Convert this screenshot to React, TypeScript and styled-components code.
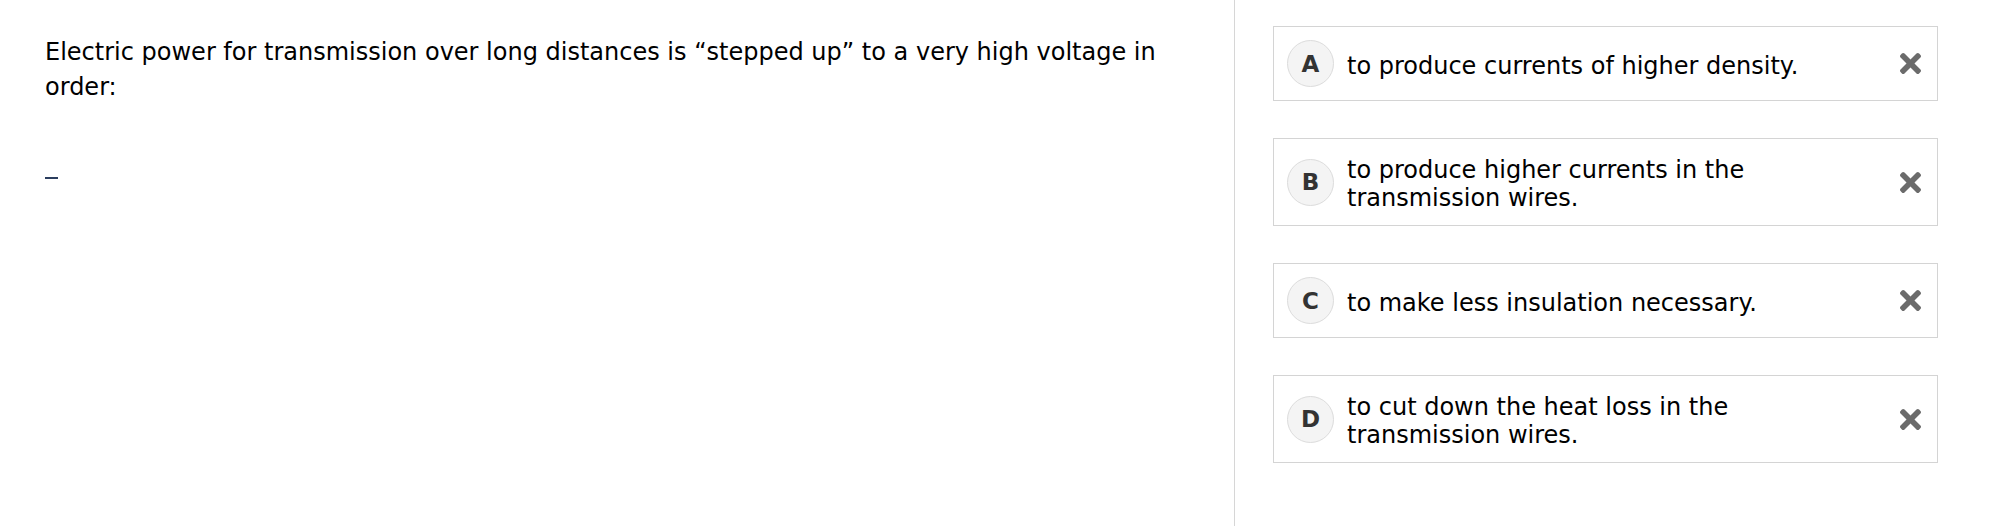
import React from "react";
import styled, { createGlobalStyle } from "styled-components";

const GlobalStyle = createGlobalStyle`
  html, body {
    margin: 0;
    padding: 0;
    background: #ffffff;
  }
  body {
    font-family: "DejaVu Sans", Verdana, sans-serif;
    color: #000;
  }
`;

const Page = styled.div`
  display: flex;
  width: 2000px;
  height: 526px;
  overflow: hidden;
`;

const QuestionPanel = styled.section`
  width: 1144px;
  flex: none;
  padding: 35px 45px 0 45px;
  border-right: 1px solid #d6d6d6;
`;

const QuestionText = styled.p`
  margin: 0;
  font-size: 24px;
  line-height: 35px;
  color: #000;
`;

const AnswerMark = styled.span`
  display: block;
  width: 13px;
  height: 2px;
  margin-top: 72px;
  background: #2b3e5e;
`;

const OptionsPanel = styled.section`
  flex: 1;
  display: flex;
  flex-direction: column;
  gap: 37px;
  padding: 26px 62px 0 38px;
`;

const OptionBox = styled.div`
  display: flex;
  align-items: center;
  gap: 13px;
  padding: 13px 16px 13px 13px;
  border: 1px solid #d4d4d4;
  background: #fff;
`;

const Letter = styled.span`
  flex: none;
  width: 45px;
  height: 45px;
  border-radius: 50%;
  border: 1px solid #dcdcdc;
  background: #f4f4f4;
  display: flex;
  align-items: center;
  justify-content: center;
  font-size: 23px;
  font-weight: bold;
  color: #333;
`;

const OptionText = styled.span`
  flex: 1;
  max-width: 500px;
  font-size: 24px;
  line-height: 28px;
  padding-top: 4px;
  color: #000;
`;

const Remove = styled.span`
  margin-left: auto;
  flex: none;
  display: flex;
  align-items: center;
  color: #6b6b6b;
`;

const XIcon = () => (
  <svg width="21" height="21" viewBox="0 80 352 352" fill="currentColor" aria-hidden="true">
    <path d="M242.72 256l100.07-100.07c12.28-12.28 12.28-32.19 0-44.48l-22.24-22.24c-12.28-12.28-32.19-12.28-44.48 0L176 189.28 75.93 89.21c-12.28-12.28-32.19-12.28-44.48 0L9.21 111.45c-12.28 12.28-12.28 32.19 0 44.48L109.28 256 9.21 356.07c-12.28 12.28-12.28 32.19 0 44.48l22.24 22.24c12.28 12.28 32.2 12.28 44.48 0L176 322.72l100.07 100.07c12.28 12.28 32.2 12.28 44.48 0l22.24-22.24c12.28-12.28 12.28-32.19 0-44.48L242.72 256z" />
  </svg>
);

const options = [
  { key: "A", text: "to produce currents of higher density." },
  { key: "B", text: "to produce higher currents in the transmission wires." },
  { key: "C", text: "to make less insulation necessary." },
  { key: "D", text: "to cut down the heat loss in the transmission wires." },
];

export default function App() {
  return (
    <>
      <GlobalStyle />
      <Page>
        <QuestionPanel>
          <QuestionText>
            Electric power for transmission over long distances is “stepped up” to a very high voltage in order:
          </QuestionText>
          <AnswerMark />
        </QuestionPanel>
        <OptionsPanel>
          {options.map((o) => (
            <OptionBox key={o.key}>
              <Letter>{o.key}</Letter>
              <OptionText>{o.text}</OptionText>
              <Remove>
                <XIcon />
              </Remove>
            </OptionBox>
          ))}
        </OptionsPanel>
      </Page>
    </>
  );
}
